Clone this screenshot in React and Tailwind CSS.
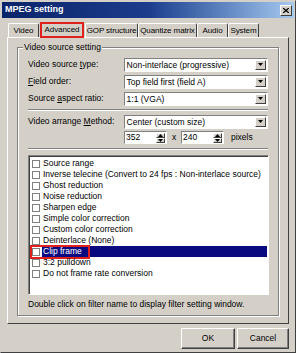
import React from "react";

const FONT = { fontFamily: '"Liberation Sans", Arial, sans-serif' };

function DropArrow() {
  return (
    <div className="w-[11px] h-full bg-[#d4d0c8] border-t border-l border-t-white border-l-white border-r border-b border-r-[#404040] border-b-[#404040] flex items-center justify-center">
      <svg width="5" height="3" viewBox="0 0 5 3">
        <path d="M0 0h5L2.5 3z" fill="#000" />
      </svg>
    </div>
  );
}

function Combo({ value }) {
  return (
    <div className="w-[145px] h-[14px] bg-white border border-t-[#808080] border-l-[#808080] border-r-white border-b-white flex items-stretch">
      <div className="flex-1 pl-[2px] text-[8.5px] leading-[12px] truncate">{value}</div>
      <div className="p-[1px] pl-0">
        <DropArrow />
      </div>
    </div>
  );
}

function Spin({ value }) {
  return (
    <div className="w-[43px] h-[13px] bg-white border border-t-[#808080] border-l-[#808080] border-r-white border-b-white flex items-stretch">
      <div className="flex-1 pl-[1px] text-[8.5px] leading-[11px]">{value}</div>
      <div className="w-[9px] m-[1px] flex flex-col">
        <div className="flex-1 bg-[#d4d0c8] border-t border-l border-white border-r border-b border-r-[#404040] border-b-[#404040] flex items-center justify-center">
          <svg width="5" height="3" viewBox="0 0 5 3"><path d="M2.5 0L5 3H0z" fill="#000" /></svg>
        </div>
        <div className="flex-1 bg-[#d4d0c8] border-t border-l border-white border-r border-b border-r-[#404040] border-b-[#404040] flex items-center justify-center">
          <svg width="5" height="3" viewBox="0 0 5 3"><path d="M0 0h5L2.5 3z" fill="#000" /></svg>
        </div>
      </div>
    </div>
  );
}

function Row({ label, value }) {
  return (
    <div className="flex items-center h-[17px]">
      <div className="w-[96px] text-[8.5px]">{label}</div>
      <Combo value={value} />
    </div>
  );
}

const filters = [
  "Source range",
  "Inverse telecine (Convert to 24 fps : Non-interlace source)",
  "Ghost reduction",
  "Noise reduction",
  "Sharpen edge",
  "Simple color correction",
  "Custom color correction",
  "Deinterlace (None)",
  "Clip frame",
  "3:2 pulldown",
  "Do not frame rate conversion",
];

const tabs = [
  { t: "Video", w: "w-[31px]" },
  { t: "Advanced", w: "w-[44px]" },
  { t: "GOP structure", w: "w-[53px]" },
  { t: "Quantize matrix", w: "w-[59px]" },
  { t: "Audio", w: "w-[31px]" },
  { t: "System", w: "w-[31px]" },
];

export default function App() {
  return (
    <div
      className="w-[296px] h-[353px] bg-[#d4d0c8] border border-t-[#d4d0c8] border-l-[#d4d0c8] border-r-[#404040] border-b-[#404040] overflow-hidden text-black flex flex-col"
      style={FONT}
    >
      {/* title bar */}
      <div className="mx-[1px] mt-[1px] h-[16px] bg-gradient-to-r from-[#0a246a] via-[#1c3c8c] to-[#a6caf0] flex items-center justify-between pl-[3px] pr-[2px]">
        <span className="text-white font-bold text-[9px]">MPEG setting</span>
        <div className="w-[12px] h-[11px] bg-[#d4d0c8] border border-t-white border-l-white border-r-[#404040] border-b-[#404040] flex items-center justify-center">
          <svg width="6" height="5" viewBox="0 0 6 5">
            <path d="M0 0L6 5M6 0L0 5" stroke="#000" strokeWidth="1.3" />
          </svg>
        </div>
      </div>

      {/* tabs */}
      <div className="flex items-end pl-[7px] mt-[3px] h-[16px] text-[8px] whitespace-nowrap tracking-[-0.1px]">
        {tabs.map(({ t, w }) =>
          t === "Advanced" ? (
            <div key={t} className={`${w} h-[16px] -mb-[1px] relative z-10 bg-[#d4d0c8] flex items-center justify-center border-2 border-[#e0201c] mx-[1px]`}>
              {t}
            </div>
          ) : (
            <div key={t} className={`${w} h-[14px] flex items-center justify-center border-t border-l border-white border-r border-r-[#404040] rounded-t-[2px]`}>
              {t}
            </div>
          )
        )}
      </div>

      {/* tab panel */}
      <div className="mx-[6px] w-[282px] h-[287px] border border-t-white border-l-white border-r-[#404040] border-b-[#404040] pt-[9px] px-[9px]">
        <div className="relative h-[269px] border border-[#808080] shadow-[inset_1px_1px_0_#fff,1px_1px_0_#fff] px-[10px] pt-[8px]">
          <div className="absolute -top-[6px] left-[5px] bg-[#d4d0c8] px-[1px] text-[8.5px] leading-[10px]">Video source setting</div>
          <Row label={<span>Video source <u>t</u>ype:</span>} value="Non-interlace (progressive)" />
          <Row label={<span><u>F</u>ield order:</span>} value="Top field first (field A)" />
          <Row label={<span>Source <u>a</u>spect ratio:</span>} value="1:1 (VGA)" />
          <div className="h-[2px] my-[2px] border-t border-[#808080] border-b border-b-white" />
          <Row label={<span>Video arrange <u>M</u>ethod:</span>} value="Center (custom size)" />
          <div className="flex items-center h-[15px] pl-[96px] text-[8.5px]">
            <Spin value="352" />
            <span className="w-[14px] text-center">x</span>
            <Spin value="240" />
            <span className="ml-[7px]">pixels</span>
          </div>
          <div className="h-[2px] mt-[3px] border-t border-[#808080] border-b border-b-white" />

          {/* filter list */}
          <div className="mt-[5px] w-[241px] h-[140px] bg-white border border-t-[#808080] border-l-[#808080] border-r-white border-b-white shadow-[inset_1px_1px_0_#404040] pt-[2px]">
            {filters.map((f) => {
              const sel = f === "Clip frame";
              return (
                <div key={f} className="relative flex items-center h-[11px] text-[8.5px] leading-[11px]">
                  <div className="ml-[3px] w-[8px] h-[8px] border border-[#808080] bg-white shrink-0" />
                  <div className={sel ? "ml-[2px] flex-1 bg-[#0a0a80] text-white pl-[1px] mr-[1px]" : "ml-[2px] pl-[1px]"}>{f}</div>
                  {sel && <div className="absolute left-[1px] -top-[1px] w-[60px] h-[14px] border-2 border-[#e0201c]" />}
                </div>
              );
            })}
          </div>
          <div className="mt-[3px] text-[8.5px]">Double click on filter name to display filter setting window.</div>
        </div>
      </div>

      {/* buttons */}
      <div className="flex justify-end gap-[2px] pr-[6px] mt-[4px] text-[8.5px]">
        <div className="w-[54px] h-[21px] flex items-center justify-center border border-t-white border-l-white border-r-[#404040] border-b-[#404040] shadow-[inset_-1px_-1px_0_#808080]">OK</div>
        <div className="w-[52px] h-[21px] flex items-center justify-center border border-t-white border-l-white border-r-[#404040] border-b-[#404040] shadow-[inset_-1px_-1px_0_#808080]">Cancel</div>
      </div>
    </div>
  );
}
